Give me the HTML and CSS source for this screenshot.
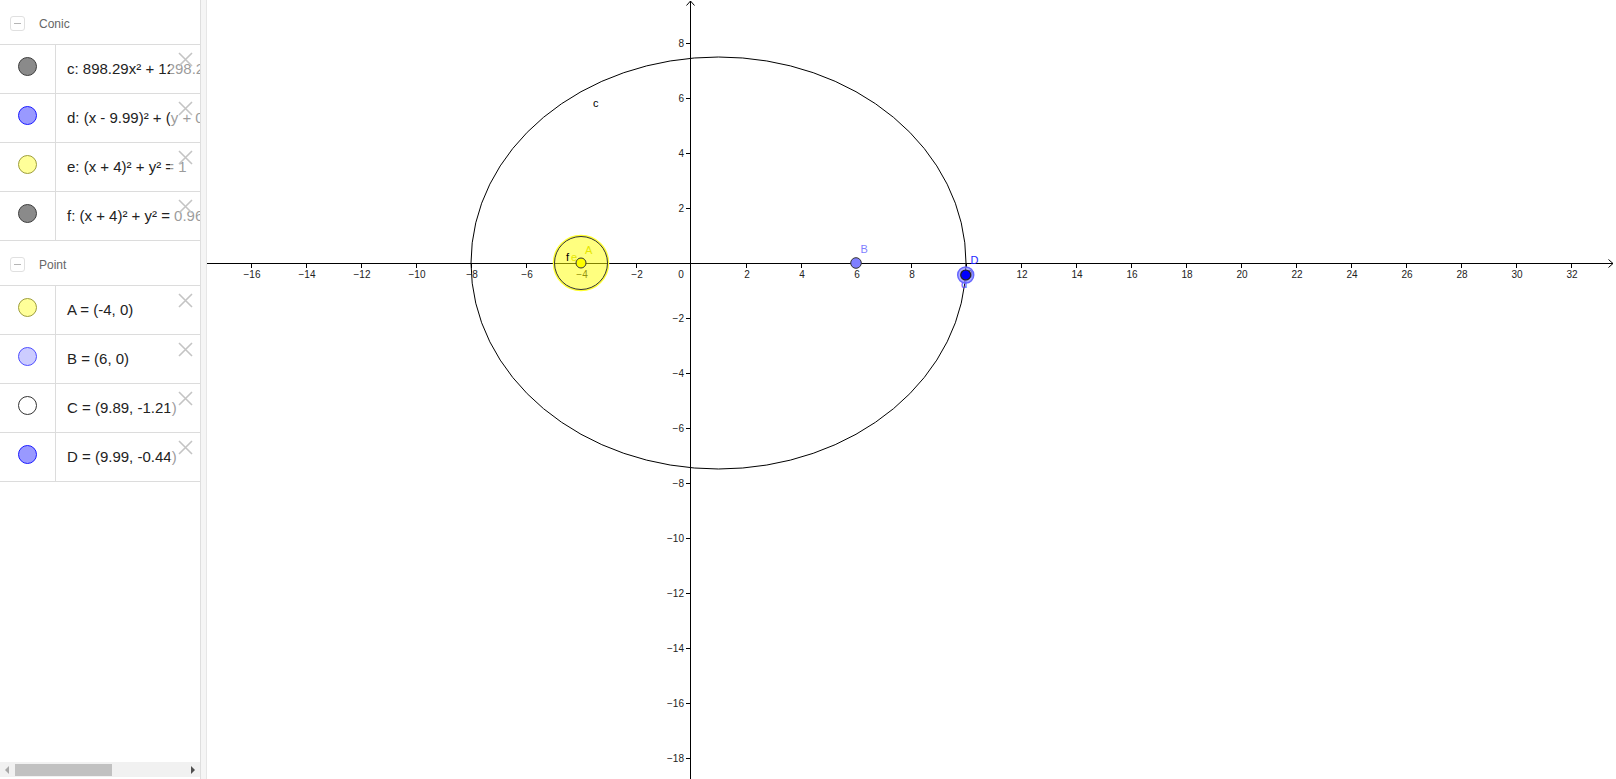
FILE: index.html
```html
<!DOCTYPE html>
<html>
<head>
<meta charset="utf-8">
<title>Graphing</title>
<link rel="stylesheet" href="styles.css">
</head>
<body>
<div class="app">
  <aside class="panel">
    <div class="list">
      <div class="group-head"><span class="toggle"><span class="minus"></span></span><span class="group-name">Conic</span></div>
      <div class="row">
        <div class="marker-cell"><span class="marker m-gray"></span></div>
        <div class="formula">c: 898.29x² + 1298.29y² − 1796.58x = 71856.57</div>
        <div class="close"><svg viewBox="0 0 15 15" class="x-icon"><path d="M1 1L14 14M14 1L1 14"/></svg></div>
      </div>
      <div class="row">
        <div class="marker-cell"><span class="marker m-blue"></span></div>
        <div class="formula">d: (x - 9.99)² + (y + 0.44)² = 0.08</div>
        <div class="close"><svg viewBox="0 0 15 15" class="x-icon"><path d="M1 1L14 14M14 1L1 14"/></svg></div>
      </div>
      <div class="row">
        <div class="marker-cell"><span class="marker m-yellow"></span></div>
        <div class="formula">e: (x + 4)² + y² = 1</div>
        <div class="close"><svg viewBox="0 0 15 15" class="x-icon"><path d="M1 1L14 14M14 1L1 14"/></svg></div>
      </div>
      <div class="row">
        <div class="marker-cell"><span class="marker m-gray"></span></div>
        <div class="formula">f: (x + 4)² + y² = 0.96</div>
        <div class="close"><svg viewBox="0 0 15 15" class="x-icon"><path d="M1 1L14 14M14 1L1 14"/></svg></div>
      </div>
      <div class="group-head"><span class="toggle"><span class="minus"></span></span><span class="group-name">Point</span></div>
      <div class="row">
        <div class="marker-cell"><span class="marker m-yellow"></span></div>
        <div class="formula">A = (-4, 0)</div>
        <div class="close"><svg viewBox="0 0 15 15" class="x-icon"><path d="M1 1L14 14M14 1L1 14"/></svg></div>
      </div>
      <div class="row">
        <div class="marker-cell"><span class="marker m-lightblue"></span></div>
        <div class="formula">B = (6, 0)</div>
        <div class="close"><svg viewBox="0 0 15 15" class="x-icon"><path d="M1 1L14 14M14 1L1 14"/></svg></div>
      </div>
      <div class="row">
        <div class="marker-cell"><span class="marker m-white"></span></div>
        <div class="formula">C = (9.89, -1.21)</div>
        <div class="close"><svg viewBox="0 0 15 15" class="x-icon"><path d="M1 1L14 14M14 1L1 14"/></svg></div>
      </div>
      <div class="row">
        <div class="marker-cell"><span class="marker m-blue"></span></div>
        <div class="formula">D = (9.99, -0.44)</div>
        <div class="close"><svg viewBox="0 0 15 15" class="x-icon"><path d="M1 1L14 14M14 1L1 14"/></svg></div>
      </div>
    </div>
    <div class="hscroll">
      <span class="arrow arrow-left"></span>
      <span class="track"><span class="thumb"></span></span>
      <span class="arrow arrow-right"></span>
    </div>
  </aside>
  <div class="divider"></div>
  <main class="canvas">
    <svg class="graph" width="1409" height="779" viewBox="207 0 1409 779">
      <g class="axes">
        <path d="M207 263.5H1613M690.5 1V779"/>
        <path d="M1608.5 259.5L1613 263.5L1608.5 267.5M686.5 5.5L690.5 1L694.5 5.5" fill="none"/>
        <path d="M251.5 263V268M306.5 263V268M361.5 263V268M416.5 263V268M471.5 263V268M526.5 263V268M581.5 263V268M636.5 263V268M746.5 263V268M801.5 263V268M856.5 263V268M911.5 263V268M966.5 263V268M1021.5 263V268M1076.5 263V268M1131.5 263V268M1186.5 263V268M1241.5 263V268M1296.5 263V268M1351.5 263V268M1406.5 263V268M1461.5 263V268M1516.5 263V268M1571.5 263V268"/>
        <path d="M686 43.5H691M686 98.5H691M686 153.5H691M686 208.5H691M686 318.5H691M686 373.5H691M686 428.5H691M686 483.5H691M686 538.5H691M686 593.5H691M686 648.5H691M686 703.5H691M686 758.5H691"/>
      </g>
      <g class="tick-label xl">
        <text x="252" y="278">−16</text>
        <text x="307" y="278">−14</text>
        <text x="362" y="278">−12</text>
        <text x="417" y="278">−10</text>
        <text x="472" y="278">−8</text>
        <text x="527" y="278">−6</text>
        <text x="582" y="278">−4</text>
        <text x="637" y="278">−2</text>
        <text x="681" y="278">0</text>
        <text x="747" y="278">2</text>
        <text x="802" y="278">4</text>
        <text x="857" y="278">6</text>
        <text x="912" y="278">8</text>
        <text x="967" y="278">10</text>
        <text x="1022" y="278">12</text>
        <text x="1077" y="278">14</text>
        <text x="1132" y="278">16</text>
        <text x="1187" y="278">18</text>
        <text x="1242" y="278">20</text>
        <text x="1297" y="278">22</text>
        <text x="1352" y="278">24</text>
        <text x="1407" y="278">26</text>
        <text x="1462" y="278">28</text>
        <text x="1517" y="278">30</text>
        <text x="1572" y="278">32</text>
      </g>
      <g class="tick-label yl">
        <text x="684" y="47">8</text>
        <text x="684" y="102">6</text>
        <text x="684" y="157">4</text>
        <text x="684" y="212">2</text>
        <text x="684" y="322">−2</text>
        <text x="684" y="377">−4</text>
        <text x="684" y="432">−6</text>
        <text x="684" y="487">−8</text>
        <text x="684" y="542">−10</text>
        <text x="684" y="597">−12</text>
        <text x="684" y="652">−14</text>
        <text x="684" y="707">−16</text>
        <text x="684" y="762">−18</text>
      </g>
      <ellipse class="conic-c" cx="718.5" cy="263" rx="247.5" ry="206"/>
      <text class="obj-label lbl-black" x="593" y="107">c</text>
      <circle class="conic-e" cx="581" cy="263" r="27.5"/>
      <circle class="conic-f" cx="581" cy="263" r="26.5"/>
      <circle class="pt-a" cx="581" cy="263" r="5"/>
      <text class="obj-label lbl-black" x="566" y="260.5">f</text>
      <text class="obj-label lbl-yellow" x="571" y="260.5">e</text>
      <text class="obj-label lbl-yellow" x="585" y="253.5">A</text>
      <circle class="pt-b" cx="856" cy="263" r="5.3"/>
      <text class="obj-label lbl-lightblue" x="860.5" y="253">B</text>
      <text class="obj-label lbl-blue2" x="961" y="288">d</text>
      <circle class="conic-d" cx="965.7" cy="275" r="8"/>
      <circle class="pt-d" cx="965.7" cy="275" r="5"/>
      <text class="obj-label lbl-blue" x="970.5" y="264">D</text>
    </svg>
  </main>
</div>
</body>
</html>
```
FILE: styles.css
```css
html, body {
  margin: 0;
  padding: 0;
  background: #ffffff;
}
body {
  width: 1616px;
  height: 779px;
  overflow: hidden;
  font-family: "Liberation Sans", Arial, sans-serif;
}
.app {
  display: flex;
  width: 1616px;
  height: 779px;
}
.panel {
  width: 200px;
  height: 779px;
  display: flex;
  flex-direction: column;
  flex: none;
  background: #fff;
}
.list {
  flex: 1;
  overflow: hidden;
}
.group-head {
  height: 41px;
  padding-top: 3px;
  display: flex;
  align-items: center;
  border-bottom: 1px solid #dcdcdc;
}
.toggle {
  width: 13px;
  height: 13px;
  margin-left: 10px;
  border: 1px solid #e0e0e0;
  border-radius: 3px;
  display: flex;
  align-items: center;
  justify-content: center;
}
.minus {
  width: 7px;
  height: 1px;
  background: #b5b5b5;
}
.group-name {
  margin-left: 14px;
  font-size: 12px;
  color: #666;
}
.row {
  position: relative;
  height: 48px;
  display: flex;
  border-bottom: 1px solid #dcdcdc;
  overflow: hidden;
}
.marker-cell {
  width: 56px;
  flex: none;
  border-right: 1px solid #dcdcdc;
  display: flex;
  justify-content: center;
  padding-top: 12px;
  box-sizing: border-box;
}
.marker {
  width: 17px;
  height: 17px;
  border-radius: 50%;
  border: 1px solid #333;
}
.m-gray { background: #8a8a8a; border-color: #3d3d3d; }
.m-blue { background: #9999ff; border-color: #1a1aff; }
.m-yellow { background: #ffff99; border-color: #9e9e3a; }
.m-lightblue { background: #ccccff; border-color: #4d4dff; }
.m-white { background: #ffffff; border-color: #333; }
.formula {
  padding-left: 11px;
  font-size: 15px;
  color: #222;
  white-space: nowrap;
  display: flex;
  align-items: center;
  padding-bottom: 2px;
}
.close {
  position: absolute;
  top: 0;
  right: 0;
  width: 30px;
  height: 48px;
  background: rgba(255, 255, 255, 0.55);
}
.x-icon {
  position: absolute;
  left: 8px;
  top: 7px;
  width: 15px;
  height: 15px;
}
.x-icon path {
  stroke: #c4c4c4;
  stroke-width: 1.6;
  fill: none;
}
.hscroll {
  height: 15px;
  margin-bottom: 2px;
  background: #f1f1f1;
  display: flex;
  align-items: center;
}
.arrow {
  width: 0;
  height: 0;
  border-top: 4px solid transparent;
  border-bottom: 4px solid transparent;
}
.arrow-left {
  margin-left: 5px;
  border-right: 4px solid #a8a8a8;
}
.arrow-right {
  margin-right: 5px;
  border-left: 4px solid #505050;
}
.track {
  flex: 1;
  height: 12px;
  margin: 0 6px;
  display: flex;
}
.thumb {
  width: 97px;
  height: 12px;
  background: #c1c1c1;
}
.divider {
  width: 5px;
  flex: none;
  height: 779px;
  background: #f5f5f5;
  border-left: 1px solid #dedede;
  border-right: 1px solid #e6e6e6;
}
.canvas {
  flex: 1;
  height: 779px;
  overflow: hidden;
}
.graph {
  display: block;
}
.axes path {
  stroke: #000;
  stroke-width: 1;
  fill: none;
}
.tick-label text {
  font-family: "Liberation Sans", Arial, sans-serif;
  font-size: 10px;
  fill: #222;
}
.xl text { text-anchor: middle; }
.yl text { text-anchor: end; }
.conic-c {
  fill: none;
  stroke: #000;
  stroke-width: 1;
}
.conic-e {
  fill: rgba(255, 255, 0, 0.5);
  stroke: #ffff33;
  stroke-width: 1.5;
}
.conic-f {
  fill: none;
  stroke: #333;
  stroke-width: 1;
}
.conic-d {
  fill: rgba(128, 128, 255, 0.65);
  stroke: #6666ff;
  stroke-width: 1.5;
}
.pt-a { fill: #ffff00; stroke: #333; stroke-width: 1; }
.pt-b { fill: #7f7fff; stroke: #333; stroke-width: 1; }
.pt-d { fill: #0000ff; stroke: #222; stroke-width: 1.2; }
.obj-label {
  font-family: "Liberation Sans", Arial, sans-serif;
  font-size: 11px;
}
.lbl-black { fill: #000; }
.lbl-yellow { fill: #e6e600; }
.lbl-lightblue { fill: #7f7fff; }
.lbl-blue { fill: #2626ff; }
.lbl-blue2 { fill: #4d4dff; }
```
